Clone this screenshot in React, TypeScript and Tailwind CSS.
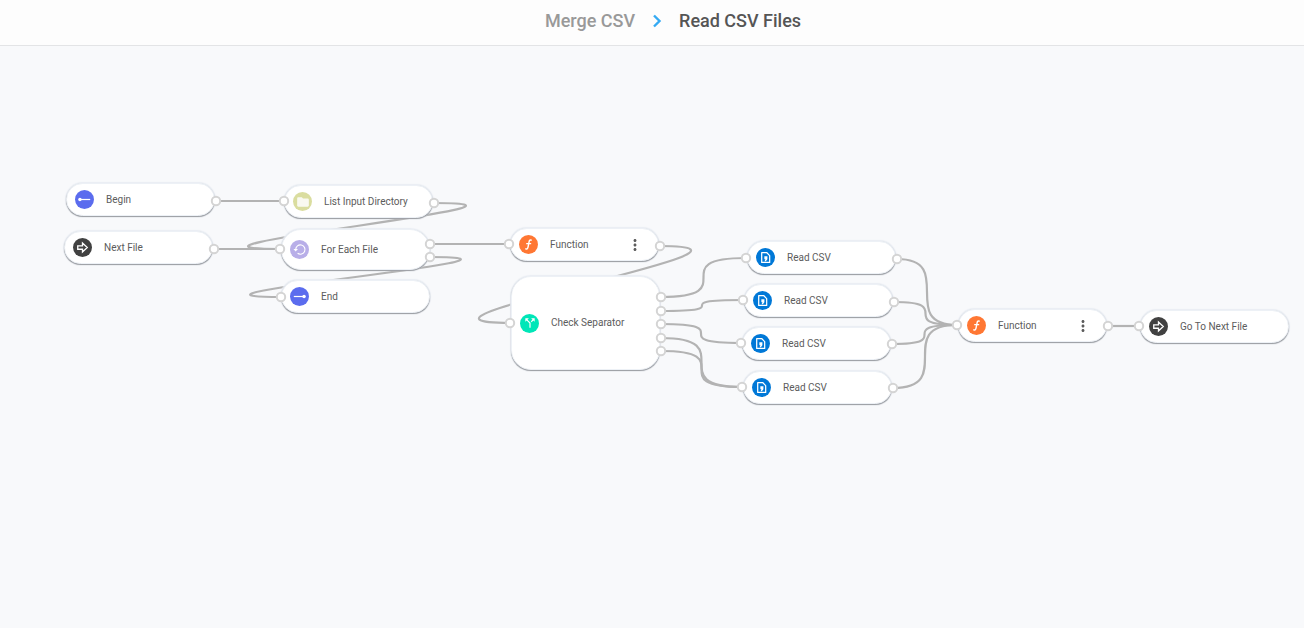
import { MdCallSplit, MdFolder, MdMoreVert } from "react-icons/md";

type Kind = "begin" | "end" | "jump" | "folder" | "loop" | "function" | "split" | "csv";

interface FlowNode {
  id: string;
  kind: Kind;
  label: string;
  x: number;
  y: number;
  height?: number;
  menu?: boolean;
}

type Point = [number, number];

const nodes: FlowNode[] = [
  { id: "begin", kind: "begin", label: "Begin", x: 66, y: 183 },
  { id: "next", kind: "jump", label: "Next File", x: 64, y: 231 },
  { id: "list", kind: "folder", label: "List Input Directory", x: 284, y: 185 },
  { id: "each", kind: "loop", label: "For Each File", x: 281, y: 229, height: 41 },
  { id: "end", kind: "end", label: "End", x: 281, y: 280 },
  { id: "fn1", kind: "function", label: "Function", x: 510, y: 228, menu: true },
  { id: "check", kind: "split", label: "Check Separator", x: 511, y: 276, height: 94 },
  { id: "read1", kind: "csv", label: "Read CSV", x: 747, y: 241 },
  { id: "read2", kind: "csv", label: "Read CSV", x: 744, y: 284 },
  { id: "read3", kind: "csv", label: "Read CSV", x: 742, y: 327 },
  { id: "read4", kind: "csv", label: "Read CSV", x: 743, y: 371 },
  { id: "fn2", kind: "function", label: "Function", x: 958, y: 309, menu: true },
  { id: "goto", kind: "jump", label: "Go To Next File", x: 1140, y: 310 },
];

const edges: [Point, Point][] = [
  [[216, 201], [284, 201]],
  [[214, 249], [280, 249]],
  [[434, 203], [280, 249]],
  [[430, 244], [509, 244]],
  [[430, 257], [281, 297]],
  [[660, 246], [510, 323]],
  [[661, 297], [746, 258]],
  [[661, 311], [743, 300]],
  [[661, 324], [741, 343]],
  [[661, 338], [742, 387]],
  [[661, 351], [742, 387]],
  [[897, 259], [957, 325]],
  [[894, 302], [957, 325]],
  [[892, 344], [957, 325]],
  [[893, 388], [957, 325]],
  [[1108, 326], [1139, 326]],
];

const ports: Point[] = Array.from(
  new Map(edges.flat().map((p) => [p.join(","), p])).values(),
);

function edgePath([[x1, y1], [x2, y2]]: [Point, Point]) {
  const reach = Math.abs(x2 - x1);
  return `M${x1} ${y1}C${x1 + reach} ${y1} ${x2 - reach} ${y2} ${x2} ${y2}`;
}

const badge: Record<Kind, string> = {
  begin: "bg-[#5b6cee]",
  end: "bg-[#5b6cee]",
  jump: "bg-[#414141]",
  folder: "bg-[#dadd9f]",
  loop: "bg-[#b8aee8]",
  function: "bg-[#ff7733]",
  split: "bg-[#00e6b8]",
  csv: "bg-[#0078d7]",
};

function Glyph({ kind }: { kind: Kind }) {
  if (kind === "folder") return <MdFolder className="size-3.5 opacity-85" />;
  if (kind === "split") return <MdCallSplit className="size-3.5" />;
  return (
    <svg viewBox="0 0 20 20" className="size-full" fill="none" stroke="currentColor" aria-hidden="true">
      {kind === "begin" && (
        <>
          <path d="M5 10H16" strokeWidth="1.3" />
          <circle cx="5.2" cy="10" r="1.8" fill="currentColor" stroke="none" />
        </>
      )}
      {kind === "end" && (
        <>
          <path d="M4 10H15" strokeWidth="1.3" />
          <circle cx="14.8" cy="10" r="1.8" fill="currentColor" stroke="none" />
        </>
      )}
      {kind === "jump" && <path d="M5 8.2H10V5.2L15 10L10 14.8V11.8H5Z" strokeWidth="1.4" />}
      {kind === "loop" && (
        <>
          <path d="M6 10A4.9 4.9 0 1 1 8 14" strokeWidth="1.2" />
          <path d="M3.6 9.4H8.4L6 12Z" fill="currentColor" stroke="none" />
        </>
      )}
      {kind === "function" && (
        <path
          d="M13.4 5.6C11.8 4.6 10.9 5.5 10.6 7.2L9.5 12.8C9.2 14.5 8.2 15.2 6.6 14.4M7.6 9.1H12.8"
          strokeWidth="1.5"
        />
      )}
      {kind === "csv" && (
        <>
          <path d="M6 4.8H11.2L14.4 8V15.2H6Z" strokeWidth="1.3" strokeLinejoin="round" />
          <path d="M8.8 8.8H12V11.8L10.4 14H9L9.9 11.8H8.8Z" fill="currentColor" stroke="none" />
        </>
      )}
    </svg>
  );
}

function NodeCard({ node }: { node: FlowNode }) {
  return (
    <article
      className="absolute flex w-[149px] items-center rounded-[20px] border border-[#edf1f6] bg-white pr-3.5 pl-2 shadow-[0_1px_1px_0_#989ba0,0_0_1px_1px_#e9edf3]"
      style={{ left: node.x, top: node.y - 46, height: node.height ?? 33 }}
    >
      <span
        className={`flex size-[19px] shrink-0 items-center justify-center rounded-full text-white ${badge[node.kind]}`}
      >
        <Glyph kind={node.kind} />
      </span>
      <h2 className="ml-3 grow text-[10px] leading-4 whitespace-nowrap text-[#5c5c5c]">{node.label}</h2>
      {node.menu && (
        <button type="button" aria-label={`${node.label} options`} className="text-[#5c5c5c]">
          <MdMoreVert className="size-[18px]" />
        </button>
      )}
    </article>
  );
}

export default function App() {
  return (
    <div className="flex min-h-screen flex-col bg-[#f8f9fb] font-[Roboto,sans-serif]">
      <header className="h-[46px] border-b border-[#e3e4e6] bg-[#fdfdfd]">
        <nav
          aria-label="Breadcrumb"
          className="flex items-center justify-center pt-[9px] pl-[42px] text-lg leading-6 font-medium"
        >
          <a href="#merge" className="text-[#999]">
            Merge CSV
          </a>
          <svg
            viewBox="0 0 10 14"
            className="mx-[17px] h-3.5 w-2.5"
            fill="none"
            stroke="#35aaf3"
            strokeWidth="2.4"
            aria-hidden="true"
          >
            <path d="M2 1.5L7.5 7L2 12.5" />
          </svg>
          <h1 className="text-[#555]">Read CSV Files</h1>
        </nav>
      </header>
      <main className="relative grow overflow-hidden">
        <svg className="absolute inset-0 size-full" fill="none" stroke="#b3b3b3" strokeWidth="2.2" aria-hidden="true">
          <g transform="translate(0 -46)">
            {edges.map((edge) => (
              <path key={edge.join()} d={edgePath(edge)} />
            ))}
          </g>
        </svg>
        {nodes.map((node) => (
          <NodeCard key={node.id} node={node} />
        ))}
        <svg className="pointer-events-none absolute inset-0 size-full" aria-hidden="true">
          <g transform="translate(0 -46)" fill="#fff" stroke="#d4d4d4" strokeWidth="2">
            {ports.map(([x, y]) => (
              <circle key={`${x}-${y}`} cx={x} cy={y} r="4.2" />
            ))}
          </g>
        </svg>
      </main>
    </div>
  );
}
